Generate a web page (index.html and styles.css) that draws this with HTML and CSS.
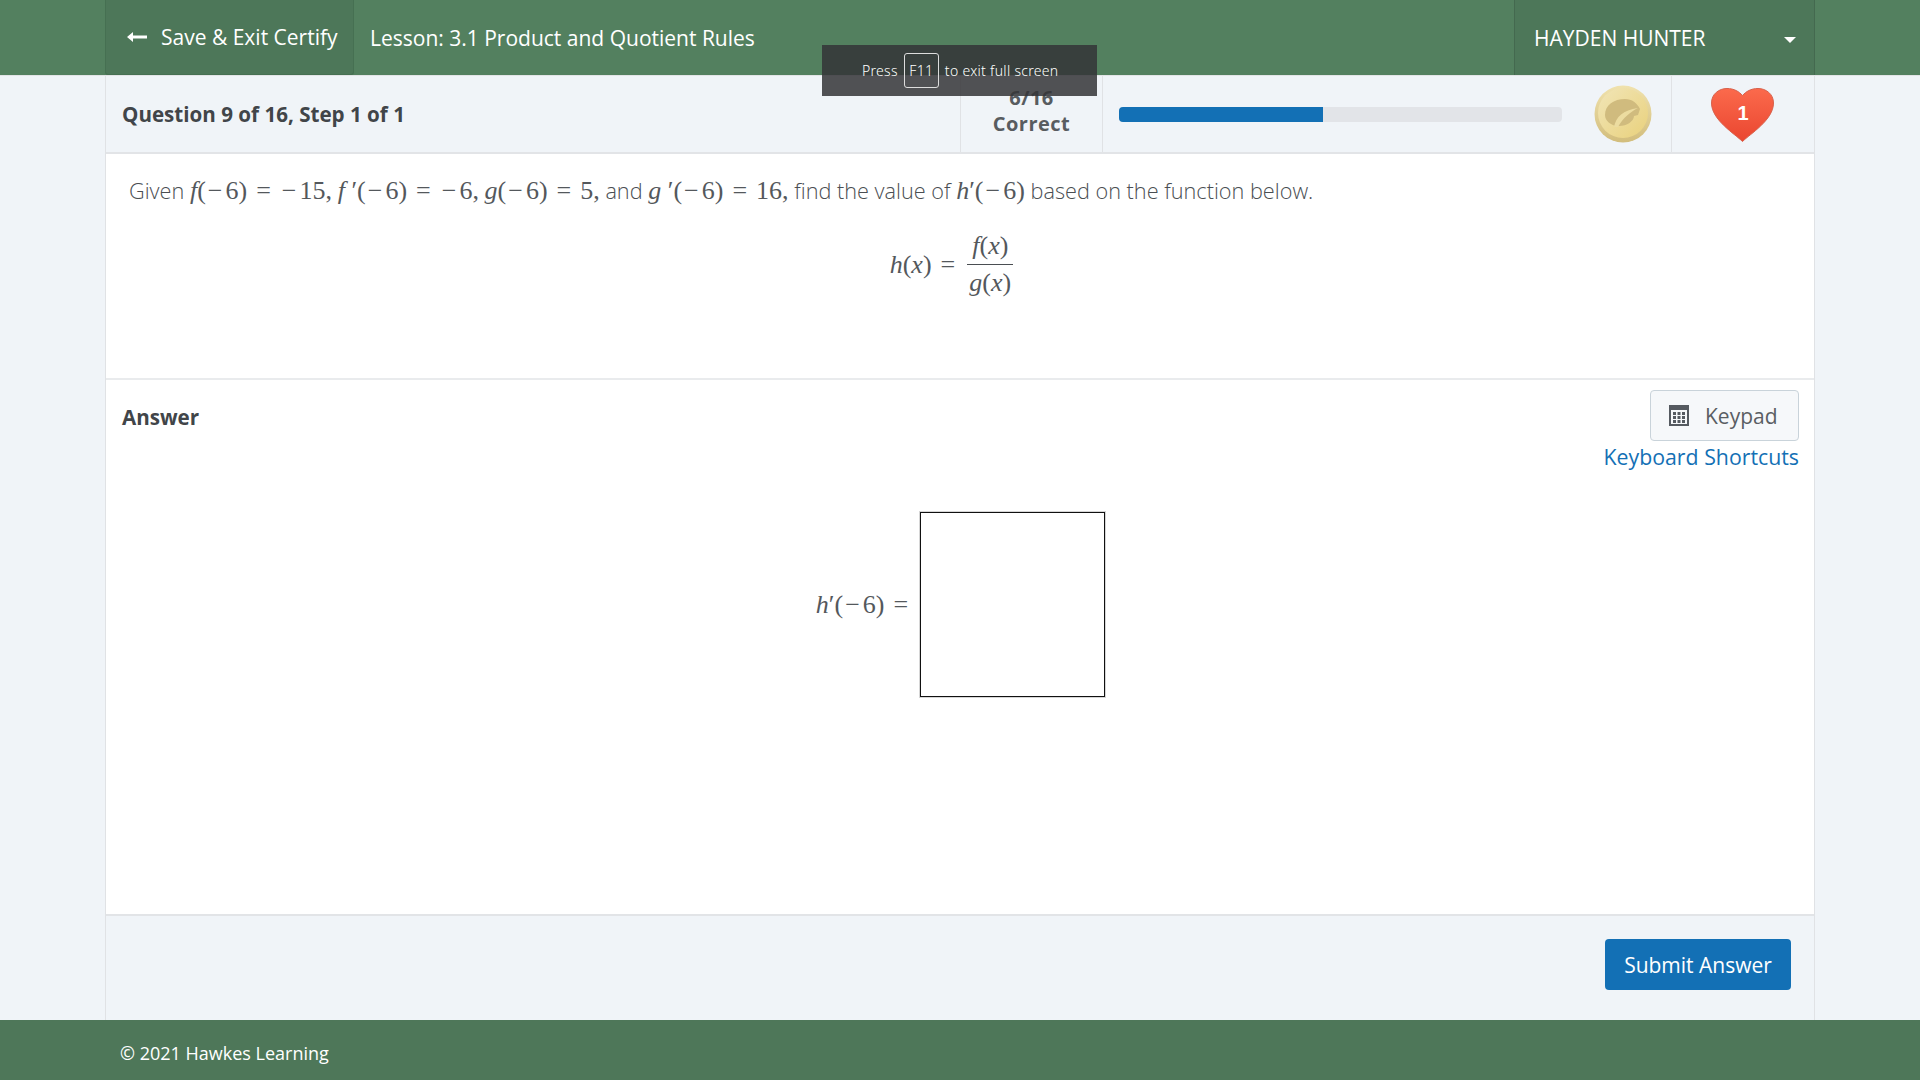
FILE: index.html
```html
<!DOCTYPE html>
<html lang="en">
<head>
<meta charset="UTF-8">
<title>Certify - Question 9 of 16</title>
<link rel="stylesheet" href="styles.css">
</head>
<body>
<header class="topbar">
  <div class="wrap topbar-inner">
    <a class="exit-btn">
      <svg class="arrow" width="20" height="12" viewBox="0 0 20 12"><path d="M0 6l6-5v3.500h14v3H6V11z" fill="#fff"/></svg>
      Save &amp; Exit Certify
    </a>
    <div class="lesson">Lesson: 3.1 Product and Quotient Rules</div>
    <div class="user">
      <span>HAYDEN HUNTER</span>
      <i class="caret"></i>
    </div>
  </div>
</header>

<main class="wrap card">
  <section class="status">
    <div class="status-title">Question 9 of 16, Step 1 of 1</div>
    <div class="score"><span>6/16</span><span>Correct</span></div>
    <div class="progress"><div class="progress-fill" style="width:46%"></div></div>
    <div class="coin">
      <svg width="58" height="58" viewBox="0 0 58 58">
        <defs>
          <linearGradient id="coinEdge" x1="0" y1="0" x2="0" y2="1">
            <stop offset="0" stop-color="#f0e2ad"/>
            <stop offset="1" stop-color="#d2bd7c"/>
          </linearGradient>
          <linearGradient id="coinFace" x1="0" y1="0" x2="1" y2="1">
            <stop offset="0" stop-color="#f1e5b7"/>
            <stop offset="1" stop-color="#e9d17c"/>
          </linearGradient>
        </defs>
        <circle cx="29" cy="29" r="28.500" fill="url(#coinEdge)"/>
        <circle cx="29" cy="28" r="25" fill="url(#coinFace)"/>
        <path d="M11 30C11 20 20 14 31 14c7 0 12 4 15 10l-2 6-4 1c0 5-7 10-15 10-8 0-14-5-14-11z" fill="#d0bb7e"/>
        <path d="M20 42c2-10 9-17 24-19-8 4-15 10-20 19z" fill="#ecdca0"/>
      </svg>
    </div>
    <div class="lives">
      <svg width="63" height="54" viewBox="0 0 63 54">
        <defs>
          <linearGradient id="heartGrad" x1="0" y1="0" x2="0" y2="1">
            <stop offset="0" stop-color="#fb6a4c"/>
            <stop offset="1" stop-color="#ea4630"/>
          </linearGradient>
        </defs>
        <path d="M31.500 53.500C24 46 .5 32 .5 15 .5 6 8 .5 16 .5c7 0 12 3 15.500 7C35 3.500 40 .5 47 .5c8 0 15.500 5.500 15.500 14.500 0 17-23.500 31-31 38.500z" fill="url(#heartGrad)" stroke="#d8614b"/>
        <text x="32" y="32" class="lives-num">1</text>
      </svg>
    </div>
  </section>

  <section class="question">
    <p class="question-text">Given <span class="math"><i>f</i>(<b class="op">−</b>6)<b class="rel">=</b><b class="op">−</b>15,</span> <span class="math"><i>f</i> ′(<b class="op">−</b>6)<b class="rel">=</b><b class="op">−</b>6,</span> <span class="math"><i>g</i>(<b class="op">−</b>6)<b class="rel">=</b>5,</span> and <span class="math"><i>g</i> ′(<b class="op">−</b>6)<b class="rel">=</b>16,</span> find the value of <span class="math"><i>h</i>′(<b class="op">−</b>6)</span> based on the function below.</p>
    <div class="formula math">
      <span><i>h</i>(<i>x</i>)<b class="rel">=</b></span>
      <span class="frac">
        <span class="num"><i>f</i>(<i>x</i>)</span>
        <span class="den"><i>g</i>(<i>x</i>)</span>
      </span>
    </div>
  </section>

  <section class="answer">
    <div class="answer-head">
      <div class="answer-title">Answer</div>
      <div class="answer-tools">
        <button class="keypad-btn">
          <svg width="20" height="21" viewBox="0 0 20 21"><path fill="#555a60" fill-rule="evenodd" d="M0 0h20v21H0zM2 5v14h16V5zM4 7h3v3H4zm4.500 0h3v3h-3zM13 7h3v3h-3zM4 11h3v3H4zm4.500 0h3v3h-3zm4.500 0h3v3h-3zM4 15h3v3H4zm4.500 0h3v3h-3zm4.500 0h3v3h-3z"/></svg>
          Keypad
        </button>
        <a class="shortcuts">Keyboard Shortcuts</a>
      </div>
    </div>
    <div class="answer-row">
      <span class="math answer-label"><i>h</i>′(<b class="op">−</b>6)<b class="rel">=</b></span>
      <div class="answer-box"></div>
    </div>
  </section>

  <section class="actions">
    <button class="submit-btn">Submit Answer</button>
  </section>
</main>

<footer class="pagefoot">
  <div class="wrap pagefoot-inner">© 2021 Hawkes Learning</div>
</footer>

<div class="fs-notice">Press <kbd>F11</kbd> to exit full screen</div>
</body>
</html>
```

FILE: styles.css
```css
* {
  box-sizing: border-box;
}
html, body {
  height: 100%;
}
body {
  margin: 0;
  display: flex;
  flex-direction: column;
  height: 1080px;
  overflow: hidden;
  background-color: #f0f4f8;
  font-family: "Open Sans", sans-serif;
  color: #414549;
}
.wrap {
  width: 1710px;
  margin: 0 auto;
}

/* top bar */
.topbar {
  height: 76px;
  flex: none;
  background-color: #53805f;
  border-bottom: 1px solid #e2e4e6;
  color: #fff;
}
.topbar-inner {
  display: flex;
  height: 75px;
  font-size: 21px;
}
.exit-btn {
  display: flex;
  align-items: center;
  flex: none;
  gap: 14px;
  width: 249px;
  padding-left: 21px;
  white-space: nowrap;
  background-color: #4d7759;
  border: 1px solid #467052;
  border-top: 0;
  border-radius: 0 0 3px 3px;
}
.lesson {
  display: flex;
  align-items: center;
  padding-left: 16px;
  flex: 1;
}
.user {
  display: flex;
  align-items: center;
  justify-content: space-between;
  width: 301px;
  padding: 0 18px 0 19px;
  background-color: #4d7759;
  border-left: 1px solid #44694f;
  border-right: 1px solid #44694f;
}
.caret {
  width: 0;
  height: 0;
  margin-top: 4px;
  border-left: 6px solid transparent;
  border-right: 6px solid transparent;
  border-top: 6px solid #fff;
}

/* main card */
.card {
  flex: 1;
  display: flex;
  flex-direction: column;
  border-left: 1px solid #e0e2e5;
  border-right: 1px solid #e0e2e5;
}
.status {
  display: flex;
  align-items: center;
  height: 78px;
  flex: none;
  padding-left: 16px;
  border-bottom: 2px solid #e2e4e7;
}
.status-title {
  width: 838px;
  font-size: 20.600px;
  font-weight: 700;
}
.score {
  display: flex;
  flex-direction: column;
  align-items: center;
  justify-content: center;
  width: 143px;
  height: 100%;
  padding-bottom: 7px;
  font-size: 20px;
  line-height: 26px;
  font-weight: 700;
  letter-spacing: .5px;
  color: #585c60;
  border-left: 1px solid #e0e2e5;
  border-right: 1px solid #e0e2e5;
}
.progress {
  width: 443px;
  height: 15px;
  margin-left: 16px;
  background-color: #e2e4e8;
  border-radius: 4px;
  overflow: hidden;
}
.progress-fill {
  height: 100%;
  background-color: #1370b5;
}
.coin {
  width: 110px;
  display: flex;
  align-items: center;
  height: 100%;
  padding-left: 32px;
  border-right: 1px solid #e0e2e5;
}
.lives {
  flex: 1;
  display: flex;
  align-items: center;
  justify-content: center;
  padding-top: 2px;
  padding-right: 2px;
}
.lives-num {
  font-family: "Liberation Sans", sans-serif;
  font-size: 20px;
  font-weight: 700;
  fill: #fff;
  text-anchor: middle;
}

/* question */
.question {
  height: 226px;
  flex: none;
  padding: 23px 23px 0;
  background-color: #fff;
  border-bottom: 2px solid #e9ebed;
}
.question-text {
  margin: 0;
  font-size: 21.700px;
  line-height: 28px;
  font-weight: 300;
  color: #4a4e52;
  white-space: nowrap;
}
.math {
  font-family: "Liberation Serif", serif;
  font-size: 26px;
  line-height: 28px;
  font-weight: 400;
  color: #54585c;
}
.op {
  font-weight: 400;
  margin: 0 3px 0 2px;
}
.rel {
  font-weight: 400;
  margin: 0 9px;
}
.formula {
  display: flex;
  align-items: center;
  justify-content: center;
  gap: 3px;
  margin-top: 23px;
  padding-right: 17px;
}
.frac {
  display: flex;
  flex-direction: column;
  align-items: center;
  line-height: 36px;
}
.num {
  padding: 0 5px;
  border-bottom: 1px solid #4a4e52;
}

/* answer */
.answer {
  flex: 1;
  padding: 10px 15px 0 16px;
  background-color: #fff;
  border-bottom: 2px solid #e2e4e7;
}
.answer-head {
  display: flex;
  justify-content: space-between;
}
.answer-title {
  margin-top: 13px;
  font-size: 20.600px;
  font-weight: 700;
}
.answer-tools {
  display: flex;
  flex-direction: column;
  align-items: flex-end;
}
.keypad-btn {
  display: flex;
  align-items: center;
  gap: 16px;
  width: 149px;
  height: 51px;
  padding: 0 0 0 18px;
  background-color: #f6f8fa;
  border: 1px solid #c9d3da;
  border-radius: 4px;
  font-family: "Open Sans", sans-serif;
  font-size: 21px;
  color: #5a5e63;
}
.shortcuts {
  font-size: 21.300px;
  line-height: 30px;
  margin-top: 1px;
  color: #1370b5;
}
.answer-row {
  display: flex;
  align-items: center;
  justify-content: center;
  gap: 3px;
  margin-top: 40px;
}
.answer-box {
  width: 185px;
  height: 185px;
  background-color: #fff;
  border: 1px solid #111;
  outline: 1px solid #d6d6d6;
}

/* actions */
.actions {
  height: 104px;
  flex: none;
  display: flex;
  align-items: flex-start;
  justify-content: flex-end;
  padding: 23px 23px 0 0;
}
.submit-btn {
  width: 186px;
  height: 51px;
  background-color: #1370b5;
  border: 0;
  border-radius: 4px;
  font-family: "Open Sans", sans-serif;
  font-size: 21px;
  color: #fff;
}

/* page footer */
.pagefoot {
  height: 60px;
  flex: none;
  background-color: #4e7759;
  color: #fff;
}
.pagefoot-inner {
  padding: 20px 15px 0;
  font-size: 18px;
  line-height: 26px;
}

/* browser full screen notice, sits over the page */
.fs-notice {
  position: absolute;
  top: 45px;
  left: 822px;
  width: 275px;
  height: 51px;
  display: flex;
  align-items: center;
  gap: 6px;
  padding-left: 40px;
  background-color: rgba(52, 52, 55, .85);
  font-family: "Noto Sans", sans-serif;
  font-size: 14px;
  font-weight: 300;
  letter-spacing: .3px;
  white-space: nowrap;
  color: #fff;
}
.fs-notice kbd {
  display: flex;
  align-items: center;
  justify-content: center;
  width: 35px;
  height: 35px;
  border: 1px solid #ddd;
  border-radius: 3px;
  font-family: "Noto Sans", sans-serif;
}
```
